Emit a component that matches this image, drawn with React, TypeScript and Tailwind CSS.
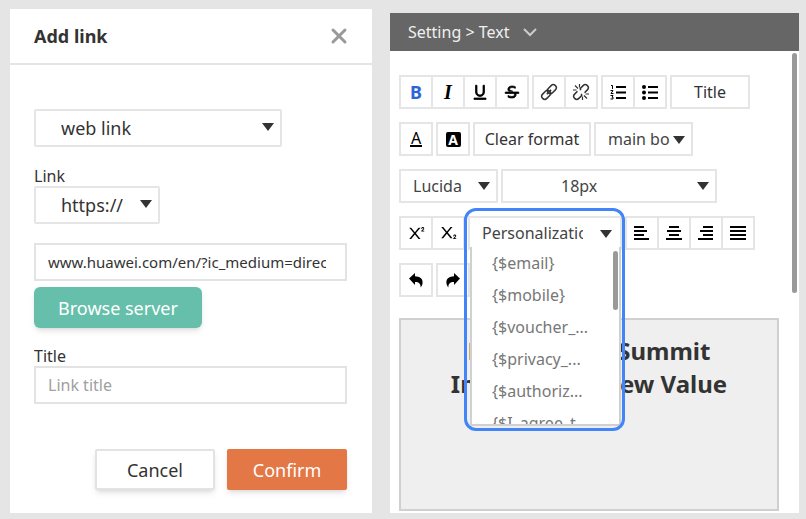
import type { ReactNode, SelectHTMLAttributes } from "react";
import { RiStrikethrough, RiSubscript, RiSuperscript, RiUnderline } from "react-icons/ri";
import clsx from "clsx";

type DropdownProps = SelectHTMLAttributes<HTMLSelectElement> & {
  options: string[];
  box: string;
  arrow: string;
};

function Dropdown({ options, box, arrow, className, ...rest }: DropdownProps) {
  return (
    <div className={clsx("relative", box)}>
      <select
        {...rest}
        className={clsx("block h-full w-full appearance-none border-2 border-[#e5e5e5] bg-white outline-none", className)}
      >
        {options.map((option) => (
          <option key={option}>{option}</option>
        ))}
      </select>
      <svg viewBox="0 0 12 8" className={clsx("pointer-events-none absolute h-2 w-3 fill-[#333]", arrow)} aria-hidden="true">
        <path d="M0 0h12L6 8z" />
      </svg>
    </div>
  );
}

function ToolGroup({ children }: { children: ReactNode }) {
  return <div className="flex h-[34px] divide-x-2 divide-[#e5e5e5] border-2 border-[#e5e5e5] bg-white">{children}</div>;
}

function Tool({ label, children }: { label: string; children: ReactNode }) {
  return (
    <button type="button" aria-label={label} className="box-content flex w-[30px] items-center justify-center text-black">
      {children}
    </button>
  );
}

function Lines({ d }: { d: string }) {
  return (
    <svg viewBox="0 0 16 16" className="size-4 fill-none stroke-black stroke-2" aria-hidden="true">
      <path d={d} />
    </svg>
  );
}

function CurvedArrow({ flip = false }: { flip?: boolean }) {
  return (
    <svg viewBox="0 0 16 16" className={clsx("size-4 fill-black", flip && "-scale-x-100")} aria-hidden="true">
      <path d="M1 6.500 7 1v3.200c4.800.1 7.600 2.300 7.600 6 0 2-.6 3.600-2 5.300.2-3.800-1.400-5.600-5.600-5.600V13z" />
    </svg>
  );
}

function ChainIcon() {
  return (
    <svg viewBox="0 0 18 18" className="size-[18px] fill-none stroke-[#333]" strokeWidth="1.5" aria-hidden="true">
      <g transform="rotate(-45 9 9)">
        <rect x="0" y="6" width="10" height="6" rx="3" />
        <rect x="8" y="6" width="10" height="6" rx="3" />
        <path d="M6 9h6" />
      </g>
    </svg>
  );
}

function BrokenChainIcon() {
  return (
    <svg viewBox="0 0 18 18" className="size-[18px] fill-none stroke-[#333]" strokeWidth="1.5" aria-hidden="true">
      <g transform="rotate(-45 9 9)">
        <path d="M7 6H3a3 3 0 0 0 0 6h4l1-1.500" />
        <path d="M11 12h4a3 3 0 0 0 0-6h-4l-1 1.500" />
      </g>
      <path strokeWidth="1.200" d="M7.500 1v3.500M3 2.500l3 3M1 7h3.500M10.500 17v-3.500M15 15.500l-3-3M17 11h-3.500" />
    </svg>
  );
}

function AddLinkDialog() {
  const field = "h-[38px] w-full border-2 border-[#e3e3e3] pl-3 outline-none";
  return (
    <section className="flex flex-col bg-white">
      <header className="flex h-14 items-center justify-between border-b-2 border-[#e5e5e5] px-6">
        <h1 className="text-lg font-bold text-[#333]">Add link</h1>
        <button type="button" aria-label="Close">
          <svg viewBox="0 0 18 18" className="size-[18px] fill-none stroke-[#999] stroke-3" strokeLinecap="round">
            <path d="M3 3l12 12M15 3 3 15" />
          </svg>
        </button>
      </header>
      <form className="flex flex-col pt-11 pr-[25px] pl-6 text-[#333]">
        <Dropdown
          aria-label="Link type"
          options={["web link"]}
          box="h-[38px] w-[248px]"
          arrow="top-[14px] right-2"
          className="rounded-xs pr-6 pl-[25px] text-lg"
        />
        <label htmlFor="protocol" className="mt-[19px] text-base leading-5">Link</label>
        <Dropdown
          id="protocol"
          options={["https://"]}
          box="h-[38px] w-[126px]"
          arrow="top-[14px] right-2"
          className="rounded-xs pr-6 pl-[25px] text-lg"
        />
        <input
          aria-label="Link address"
          defaultValue="www.huawei.com/en/?ic_medium=direct"
          className={clsx(field, "mt-[19px] pr-[19px] text-[15px]")}
        />
        <button type="button" className="mt-[6px] h-[41px] w-[168px] rounded-md bg-[#65bfab] text-lg text-white shadow-md">
          Browse server
        </button>
        <label htmlFor="title" className="mt-[18px] text-base leading-5">Title</label>
        <input id="title" placeholder="Link title" className={clsx(field, "pr-3 text-base placeholder:text-[#a0a0a0]")} />
        <div className="mt-[45px] flex justify-end gap-3">
          <button type="button" className="h-[41px] w-[120px] rounded-xs border-2 border-[#e3e3e3] bg-white text-lg shadow-md">Cancel</button>
          <button type="submit" className="h-[41px] w-[120px] rounded-xs bg-[#e37745] text-lg text-white shadow-md">Confirm</button>
        </div>
      </form>
    </section>
  );
}

const VARIABLES = ["{$email}", "{$mobile}", "{$voucher_...", "{$privacy_...", "{$authoriz...", "{$I_agree_t"];

function PersonalizationMenu() {
  return (
    <div className="relative">
      <Dropdown
        aria-label="Personalization"
        options={["Personalization"]}
        box="h-[34px] w-[154px]"
        arrow="top-[14px] right-[10px]"
        className="pr-[37px] pl-3 text-base"
      />
      <div className="absolute top-[31px] left-[2px] z-10 h-[179px] w-[151px] overflow-hidden rounded-b-xs border-2 border-t-0 border-[#d0d0d0] bg-white">
        <ul role="listbox" aria-label="Variables" className="pl-5 text-base leading-8 text-[#777]">
          {VARIABLES.map((name) => (
            <li key={name} role="option" aria-selected={false}>{name}</li>
          ))}
        </ul>
        <div className="absolute top-1 right-[1px] h-[59px] w-[5px] rounded-full bg-[#999]" />
      </div>
      <div className="pointer-events-none absolute -top-2 -left-1 z-20 h-[223px] w-[161px] rounded-xl border-[3px] border-[#4285f8]" />
    </div>
  );
}

function TextSettings() {
  return (
    <section className="relative mt-1 flex flex-col bg-white">
      <header className="flex h-[38px] items-center gap-[14px] bg-[#666] pl-[18px] text-base text-[#f0f0f0]">
        <h2>Setting &gt; Text</h2>
        <svg viewBox="0 0 14 9" className="h-[9px] w-[14px] fill-none stroke-[#ccc] stroke-2" aria-hidden="true">
          <path d="M1 1l6 6 6-6" />
        </svg>
      </header>
      <div className="absolute top-10 right-[2px] h-60 w-[5px] rounded-full bg-[#999]" />

      <div className="flex flex-1 flex-col gap-[13px] pt-6 pr-5 pb-[2px] pl-[9px] text-[#444]">
        <div className="flex gap-[3px]">
          <ToolGroup>
            <Tool label="Bold"><b className="text-lg text-[#2c64d8]">B</b></Tool>
            <Tool label="Italic"><b className="font-['Liberation_Serif',serif] text-xl italic">I</b></Tool>
            <Tool label="Underline"><RiUnderline className="size-[18px] stroke-black stroke-1" /></Tool>
            <Tool label="Strikethrough"><RiStrikethrough className="size-[18px] stroke-black stroke-1" /></Tool>
          </ToolGroup>
          <ToolGroup>
            <Tool label="Insert link"><ChainIcon /></Tool>
            <Tool label="Remove link"><BrokenChainIcon /></Tool>
          </ToolGroup>
          <ToolGroup>
            <Tool label="Numbered list">
              <svg viewBox="0 0 16 16" className="size-4 fill-none stroke-black" aria-hidden="true">
                <path className="stroke-2" d="M6 3h10M6 8.500h10M6 14h10" />
                <path d="M1 1.500h1.500V5M.500 6.500h2.500L1 9.500h2.500M.500 11.500H3L2 13.200h1V15H.500" />
              </svg>
            </Tool>
            <Tool label="Bulleted list">
              <svg viewBox="0 0 16 16" className="size-4 fill-black stroke-black" aria-hidden="true">
                <path className="stroke-2" d="M6 3h10M6 8.500h10M6 14h10" />
                <g className="stroke-none">
                  <circle cx="2" cy="3" r="2" />
                  <circle cx="2" cy="8.500" r="2" />
                  <circle cx="2" cy="14" r="2" />
                </g>
              </svg>
            </Tool>
          </ToolGroup>
          <button type="button" className="h-[34px] w-20 border-2 border-[#e5e5e5] bg-white text-base text-[#333]">Title</button>
        </div>

        <div className="flex gap-[3px]">
          <ToolGroup>
            <Tool label="Text color"><span className="w-3 border-b-2 border-black text-center text-base leading-[14px]">A</span></Tool>
          </ToolGroup>
          <ToolGroup>
            <Tool label="Highlight color"><b className="size-[15px] rounded-xs bg-black text-center text-sm leading-[15px] text-white">A</b></Tool>
          </ToolGroup>
          <button type="button" className="h-[34px] w-[118px] border-2 border-[#e5e5e5] bg-white text-base text-[#333]">Clear format</button>
          <Dropdown
            aria-label="Paragraph style"
            options={["main body"]}
            box="h-[34px] w-[99px]"
            arrow="top-[14px] right-2"
            className="pr-[21px] pl-3 text-base"
          />
        </div>

        <div className="flex gap-[3px]">
          <Dropdown
            aria-label="Font"
            options={["Lucida"]}
            box="h-[34px] w-[99px]"
            arrow="top-[13px] right-2"
            className="pr-6 pl-3 text-base"
          />
          <Dropdown
            aria-label="Font size"
            options={["18px"]}
            box="h-[34px] w-[216px]"
            arrow="top-[13px] right-2"
            className="pr-8 pl-[58px] text-base"
          />
        </div>

        <div className="flex gap-[3px]">
          <ToolGroup>
            <Tool label="Superscript"><RiSuperscript className="size-[18px]" /></Tool>
            <Tool label="Subscript"><RiSubscript className="size-[18px]" /></Tool>
          </ToolGroup>
          <PersonalizationMenu />
          <ToolGroup>
            <Tool label="Align left"><Lines d="M0 2h10M0 6h13M0 10h10M0 14h15" /></Tool>
            <Tool label="Align center"><Lines d="M3 2h10M1 6h14M3 10h10M0 14h16" /></Tool>
            <Tool label="Align right"><Lines d="M5 2h10M2 6h13M5 10h10M0 14h15" /></Tool>
            <Tool label="Justify"><Lines d="M0 2h16M0 6h16M0 10h16M0 14h16" /></Tool>
          </ToolGroup>
        </div>

        <div className="flex gap-[3px]">
          <ToolGroup><Tool label="Undo"><CurvedArrow /></Tool></ToolGroup>
          <ToolGroup><Tool label="Redo"><CurvedArrow flip /></Tool></ToolGroup>
        </div>

        <div className="mt-2 min-h-[193px] flex-1 border-2 border-[#d0d0d0] bg-[#efefef] pt-[14px] text-center text-2xl leading-[33px] font-bold text-[#333]">
          <p>Huawei City Summit</p>
          <p>Innovations New Value</p>
        </div>
      </div>
    </section>
  );
}

export default function App() {
  return (
    <main className="grid min-h-screen grid-cols-[362fr_409fr] gap-[18px] bg-[#e5e5e5] pt-[9px] pr-[7px] pb-[6px] pl-[10px] font-['Noto_Sans',sans-serif]">
      <AddLinkDialog />
      <TextSettings />
    </main>
  );
}
